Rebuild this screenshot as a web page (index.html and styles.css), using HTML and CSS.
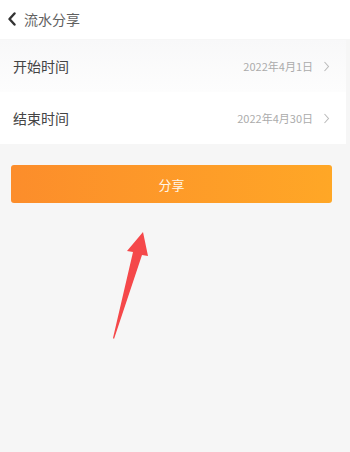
FILE: index.html
```html
<!DOCTYPE html>
<html lang="zh-CN">
<head>
<meta charset="utf-8">
<title>流水分享</title>
<link rel="stylesheet" href="styles.css">
</head>
<body>
<div class="page">
  <header class="topbar">
    <svg class="back" width="10" height="14" viewBox="0 0 10 14"><path d="M7.5 1.5 L2.5 7 L7.5 12.5" fill="none" stroke="#333" stroke-width="2.4" stroke-linecap="round" stroke-linejoin="round"/></svg>
    <span class="title">流水分享</span>
  </header>
  <section class="list">
    <div class="row row-first">
      <span class="label">开始时间</span>
      <span class="value">2022年4月1日</span>
      <svg class="chev" width="7" height="11" viewBox="0 0 7 11"><path d="M1.5 1 L5.5 5.5 L1.5 10" fill="none" stroke="#bbb" stroke-width="1.1"/></svg>
    </div>
    <div class="row">
      <span class="label">结束时间</span>
      <span class="value">2022年4月30日</span>
      <svg class="chev" width="7" height="11" viewBox="0 0 7 11"><path d="M1.5 1 L5.5 5.5 L1.5 10" fill="none" stroke="#bbb" stroke-width="1.1"/></svg>
    </div>
  </section>
  <div class="actions">
    <button class="share">分享</button>
  </div>
  <svg class="arrow" width="350" height="452" viewBox="0 0 350 452">
    <polygon points="143,232 148,256 142,255 114,339 113,338 133,252 127,251" fill="#f5484a"/>
  </svg>
</div>
</body>
</html>
```

FILE: styles.css
```css
html, body {
  margin: 0;
  padding: 0;
}
body {
  background: #f6f6f6;
  font-family: "Noto Sans CJK SC", "Noto Sans", sans-serif;
  width: 350px;
  height: 452px;
  overflow: hidden;
}
.page {
  position: relative;
  height: 452px;
}
.topbar {
  height: 39px;
  background: #ffffff;
  display: flex;
  align-items: center;
  padding-left: 7px;
  box-sizing: border-box;
}
.back {
  margin-right: 7px;
  margin-top: -1px;
}
.title {
  font-size: 14px;
  color: #606060;
  line-height: 1;
  margin-top: -1px;
}
.list {
  margin-top: 1px;
  margin-right: 4px;
  background: #ffffff;
}
.row {
  height: 52px;
  display: flex;
  align-items: center;
  padding: 0 16px 0 13px;
}
.row-first {
  background: linear-gradient(to bottom, #f8f8f9, #fdfdfd);
}
.label {
  font-size: 14px;
  color: #444444;
  flex: 1;
}
.value {
  font-size: 11px;
  color: #ababab;
  margin-right: 10px;
}
.chev {
  display: block;
}
.actions {
  padding: 21px 18px 0 11px;
}
.share {
  display: block;
  width: 100%;
  height: 38px;
  border: none;
  border-radius: 3px;
  background: linear-gradient(to right, #fc8d2b, #ffa726);
  color: #fff6ea;
  font-family: "Noto Sans CJK SC", "Noto Sans", sans-serif;
  font-size: 13px;
  padding: 0;
}
.arrow {
  position: absolute;
  left: 0;
  top: 0;
  pointer-events: none;
}
```
